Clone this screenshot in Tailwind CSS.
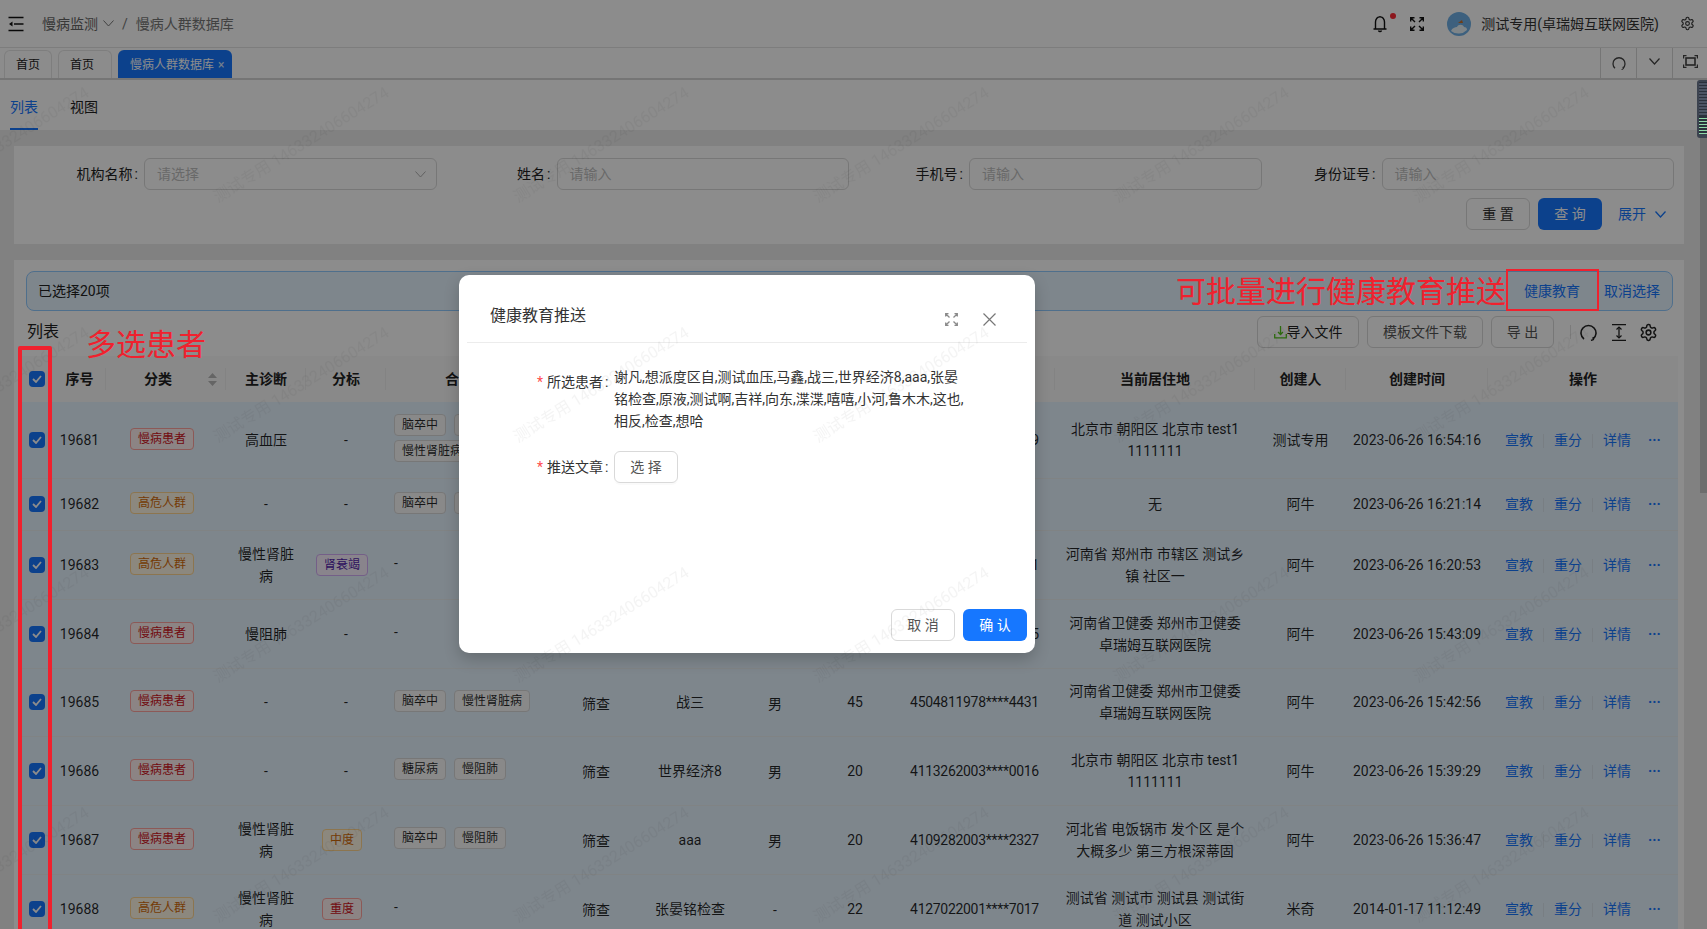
<!DOCTYPE html>
<html lang="zh-CN">
<head>
    <meta charset="UTF-8">
    <meta name="viewport" content="width=device-width, initial-scale=1.0">
    <title>慢病人群数据库</title>
    <script src="https://cdn.jsdelivr.net/npm/@tailwindcss/browser@4"></script>
</head>
<body class="relative h-screen overflow-hidden bg-[#ebebeb] text-sm text-black/85 font-['Roboto','Noto_Sans_CJK_SC',sans-serif]">

    <!-- top bar -->
    <header class="h-[48px] bg-white border-b border-[#e4e4e4] flex items-center pl-[8px] pr-[12px]">
        <svg class="w-[16px] h-[16px]" viewBox="0 0 16 16" fill="none" stroke="#111" stroke-width="1.6">
            <path d="M0.5 1.5H15.5M6 8H15.5M0.5 14.5H15.5"/>
            <path d="M4.5 5.5V10.5L1 8Z" fill="#111" stroke="none"/>
        </svg>
        <span class="ml-[18px] text-[#666]">慢病监测</span>
        <svg class="w-[11px] h-[7px] ml-[5px]" viewBox="0 0 11 7" fill="none" stroke="#777" stroke-width="1"><path d="M0.5 0.5L5.5 6L10.5 0.5"/></svg>
        <span class="ml-[8px] text-[#777]">/</span>
        <span class="ml-[8px] text-[#777]">慢病人群数据库</span>
        <div class="ml-auto flex items-center">
            <div class="relative w-[14px] h-[18px] mr-[23px]">
                <svg class="w-[14px] h-[18px]" viewBox="0 0 14 18" fill="none" stroke="#111" stroke-width="1.4">
                    <path d="M2.5 13.5V7a4.5 5.2 0 0 1 9 0v6.5M0.5 14H13.5M7 1V2M5.5 15.5a1.6 1.6 0 0 0 3 0"/>
                </svg>
                <span class="absolute left-[17px] -top-[2px] w-[6px] h-[6px] rounded-full bg-[#ff2a35]"></span>
            </div>
            <svg class="w-[14px] h-[14px] mr-[23px]" viewBox="0 0 14 14" fill="none" stroke="#111" stroke-width="1.4">
                <path d="M0.7 4.5V0.7H4.5M0.7 0.7L5 5M13.3 4.5V0.7H9.5M13.3 0.7L9 5M0.7 9.5V13.3H4.5M0.7 13.3L5 9M13.3 9.5V13.3H9.5M13.3 13.3L9 9"/>
            </svg>
            <svg class="w-[24px] h-[24px]" viewBox="0 0 24 24">
                <circle cx="12" cy="12" r="12" fill="#6fb0e6"/>
                <path d="M4 19c1-3 4-4 6-4 1-3 6-3 7 0 2 0 3 1 3 3a12 12 0 0 1-16 1z" fill="#e8f2f8"/>
                <path d="M11 11l4-3 1 3z" fill="#c9702a"/>
            </svg>
            <span class="ml-[10px] text-[#333]">测试专用(卓瑞姆互联网医院)</span>
            <svg class="w-[15px] h-[15px] ml-[21px]" viewBox="0 0 24 24" fill="none" stroke="#333" stroke-width="1.8">
                <path d="M12.22 2h-.44a2 2 0 0 0-2 2v.18a2 2 0 0 1-1 1.73l-.43.25a2 2 0 0 1-2 0l-.15-.08a2 2 0 0 0-2.73.73l-.22.38a2 2 0 0 0 .73 2.73l.15.1a2 2 0 0 1 1 1.72v.51a2 2 0 0 1-1 1.74l-.15.09a2 2 0 0 0-.73 2.73l.22.38a2 2 0 0 0 2.73.73l.15-.08a2 2 0 0 1 2 0l.43.25a2 2 0 0 1 1 1.73V20a2 2 0 0 0 2 2h.44a2 2 0 0 0 2-2v-.18a2 2 0 0 1 1-1.73l.43-.25a2 2 0 0 1 2 0l.15.08a2 2 0 0 0 2.73-.73l.22-.39a2 2 0 0 0-.73-2.73l-.15-.08a2 2 0 0 1-1-1.74v-.5a2 2 0 0 1 1-1.74l.15-.09a2 2 0 0 0 .73-2.73l-.22-.38a2 2 0 0 0-2.73-.73l-.15.08a2 2 0 0 1-2 0l-.43-.25a2 2 0 0 1-1-1.73V4a2 2 0 0 0-2-2z"/>
                <circle cx="12" cy="12" r="3"/>
            </svg>
        </div>
    </header>

    <!-- page tabs -->
    <div class="h-[32px] bg-white border-b-2 border-[#d6d6d6] flex items-end pl-[4px] text-xs">
        <div class="h-[28px] w-[48px] flex items-center pl-[11px] border border-b-0 border-[#e6e6e6] rounded-t-md text-[#222]">首页</div>
        <div class="h-[28px] w-[54px] ml-[6px] flex items-center pl-[11px] border border-b-0 border-[#e6e6e6] rounded-t-md text-[#222]">首页</div>
        <div class="h-[28px] w-[114px] ml-[6px] flex items-center pl-[12px] pt-[1px] rounded-t-md bg-[#1677ff] text-white">慢病人群数据库<span class="ml-[4px] text-[#d8e8ff]">×</span></div>
        <div class="ml-auto h-[30px] w-[107px] flex">
            <div class="w-[36px] border-l border-[#d6d6d6] flex items-center justify-center">
                <svg class="w-[14px] h-[14px]" viewBox="0 0 14 14" fill="none" stroke="#444" stroke-width="1.3"><path d="M3 12.2A6 6 0 1 1 11 12.2"/><path d="M9.5 13.6L11.3 13L11.1 10.8" stroke-width="1"/></svg>
            </div>
            <div class="w-[36px] border-l border-[#d6d6d6] flex items-center justify-center pb-[4px]">
                <svg class="w-[11px] h-[7px]" viewBox="0 0 11 7" fill="none" stroke="#444" stroke-width="1.2"><path d="M0.5 0.5L5.5 6L10.5 0.5"/></svg>
            </div>
            <div class="w-[35px] border-l border-[#d6d6d6] flex items-center justify-center pb-[3px]">
                <svg class="w-[15px] h-[13px]" viewBox="0 0 15 13" fill="none" stroke="#444" stroke-width="1.2">
                    <path d="M0.6 3.5V0.6H3.5M11.5 0.6H14.4V3.5M0.6 9.5V12.4H3.5M11.5 12.4H14.4V9.5"/>
                    <rect x="3" y="3" width="9" height="7" stroke-width="1.6"/>
                </svg>
            </div>
        </div>
    </div>

    <!-- list / view tabs -->
    <div class="h-[50px] bg-white flex pl-[10px] gap-[32px]">
        <div class="h-[50px] pt-[17px] border-b-2 border-[#1677ff] text-[#1677ff] leading-[20px]">列表</div>
        <div class="h-[50px] pt-[17px] text-[#222] leading-[20px]">视图</div>
    </div>

    <!-- search -->
    <section class="mt-[16px] ml-[14px] w-[1670px] h-[98px] bg-white px-[10px] pt-[12px]">
        <div class="grid grid-cols-4">
            <div class="flex items-center">
                <label class="w-[120px] pr-[4px] text-right text-[#222]">机构名称<span class="mx-[2px]">:</span></label>
                <div class="flex-1 h-[32px] border border-[#d9d9d9] rounded-md pl-[12px] pr-[10px] flex items-center justify-between text-[#bfbfbf]">
                    请选择
                    <svg class="w-[11px] h-[7px]" viewBox="0 0 11 7" fill="none" stroke="#b0b0b0" stroke-width="1"><path d="M0.5 0.5L5.5 6L10.5 0.5"/></svg>
                </div>
            </div>
            <div class="flex items-center">
                <label class="w-[120px] pr-[4px] text-right text-[#222]">姓名<span class="mx-[2px]">:</span></label>
                <div class="flex-1 h-[32px] border border-[#d9d9d9] rounded-md px-[12px] flex items-center text-[#bfbfbf]">请输入</div>
            </div>
            <div class="flex items-center">
                <label class="w-[120px] pr-[4px] text-right text-[#222]">手机号<span class="mx-[2px]">:</span></label>
                <div class="flex-1 h-[32px] border border-[#d9d9d9] rounded-md px-[12px] flex items-center text-[#bfbfbf]">请输入</div>
            </div>
            <div class="flex items-center">
                <label class="w-[120px] pr-[4px] text-right text-[#222]">身份证号<span class="mx-[2px]">:</span></label>
                <div class="flex-1 h-[32px] border border-[#d9d9d9] rounded-md px-[12px] flex items-center text-[#bfbfbf]">请输入</div>
            </div>
        </div>
        <div class="mt-[8px] flex justify-end items-center pr-[8px]">
            <button class="w-[64px] h-[32px] border border-[#d9d9d9] rounded-md text-[#333]">重 置</button>
            <button class="w-[64px] h-[32px] ml-[8px] rounded-md bg-[#1677ff] text-white">查 询</button>
            <span class="ml-[16px] text-[#1677ff]">展开</span>
            <svg class="w-[11px] h-[7px] ml-[9px]" viewBox="0 0 11 7" fill="none" stroke="#1677ff" stroke-width="1.3"><path d="M0.5 0.5L5.5 6L10.5 0.5"/></svg>
        </div>
    </section>

    <!-- table card -->
    <section class="mt-[16px] ml-[14px] w-[1670px] h-[700px] bg-white pt-[11px] pl-[12px]">
        <div class="w-[1647px] h-[40px] bg-[#e6f4ff] border border-[#91caff] rounded-lg flex items-center pl-[11px] pr-[12px]">
            <span class="text-[#222]">已选择20项</span>
            <span class="ml-auto text-[#1677ff]">健康教育</span>
            <span class="ml-[24px] text-[#1677ff]">取消选择</span>
        </div>
        <div class="w-[1632px] mt-[5px] h-[32px] flex items-center">
            <span class="text-base text-[#222] ml-[1px]">列表</span>
            <button class="ml-auto w-[102px] h-[32px] border border-[#d9d9d9] rounded-md flex items-center justify-center text-[#222]">
                <svg class="w-[13px] h-[14px]" viewBox="0 0 13 14" fill="none" stroke="#52c41a" stroke-width="1.3"><path d="M6.5 1V9M4 7L6.5 9.5L9 7M0.7 9V12.8H12.3V9" /></svg>导入文件
            </button>
            <button class="ml-[8px] w-[116px] h-[32px] border border-[#d9d9d9] rounded-md text-[#555]">模板文件下载</button>
            <button class="ml-[8px] w-[63px] h-[32px] border border-[#d9d9d9] rounded-md text-[#555]">导 出</button>
            <span class="ml-[16px] w-px h-[14px] bg-[#e0e0e0]"></span>
            <svg class="ml-[9px] w-[17px] h-[17px]" viewBox="0 0 17 17" fill="none" stroke="#222" stroke-width="1.6"><path d="M4 15A7.5 7.5 0 1 1 13 15"/><path d="M11 16.5L13.4 15.6L13.2 13" stroke-width="1.4"/></svg>
            <svg class="ml-[15px] w-[14px] h-[17px]" viewBox="0 0 14 17" fill="none" stroke="#222" stroke-width="1.3"><path d="M0 0.7H14M0 16.3H14M7 3V14"/><path d="M4.5 5.5L7 3L9.5 5.5M4.5 11.5L7 14L9.5 11.5" stroke-width="1.2"/></svg>
            <svg class="ml-[13px] w-[19px] h-[19px]" viewBox="0 0 24 24" fill="none" stroke="#222" stroke-width="1.9">
                <path d="M12.22 2h-.44a2 2 0 0 0-2 2v.18a2 2 0 0 1-1 1.73l-.43.25a2 2 0 0 1-2 0l-.15-.08a2 2 0 0 0-2.73.73l-.22.38a2 2 0 0 0 .73 2.73l.15.1a2 2 0 0 1 1 1.72v.51a2 2 0 0 1-1 1.74l-.15.09a2 2 0 0 0-.73 2.73l.22.38a2 2 0 0 0 2.73.73l.15-.08a2 2 0 0 1 2 0l.43.25a2 2 0 0 1 1 1.73V20a2 2 0 0 0 2 2h.44a2 2 0 0 0 2-2v-.18a2 2 0 0 1 1-1.73l.43-.25a2 2 0 0 1 2 0l.15.08a2 2 0 0 0 2.73-.73l.22-.39a2 2 0 0 0-.73-2.73l-.15-.08a2 2 0 0 1-1-1.74v-.5a2 2 0 0 1 1-1.74l.15-.09a2 2 0 0 0 .73-2.73l-.22-.38a2 2 0 0 0-2.73-.73l-.15.08a2 2 0 0 1-2 0l-.43-.25a2 2 0 0 1-1-1.73V4a2 2 0 0 0-2-2z"/>
                <circle cx="12" cy="12" r="3"/>
            </svg>
        </div>
        <table class="mt-[8px] -ml-[6px] w-[1658px] table-fixed border-collapse text-center">
            <colgroup>
                <col class="w-[33px]"><col class="w-[53px]"><col class="w-[120px]"><col class="w-[80px]"><col class="w-[80px]"><col class="w-[160px]"><col class="w-[100px]"><col class="w-[88px]"><col class="w-[82px]"><col class="w-[78px]"><col class="w-[161px]"><col class="w-[200px]"><col class="w-[91px]"><col class="w-[142px]"><col class="w-[190px]">
            </colgroup>
            <thead>
                <tr class="h-[46px] bg-[#fafafa] font-semibold text-[#222]">
                    <th><span class="mx-auto flex w-[16px] h-[16px] items-center justify-center rounded-[4px] bg-[#1677ff]"><svg class="w-[10px] h-[8px]" viewBox="0 0 10 8" fill="none" stroke="#fff" stroke-width="1.8"><path d="M1 4L4 7L9 1"/></svg></span></th>
                    <th class="relative after:absolute after:right-0 after:top-[12px] after:h-[22px] after:w-px after:bg-[#efefef]">序号</th>
                    <th class="relative after:absolute after:right-0 after:top-[12px] after:h-[22px] after:w-px after:bg-[#efefef]">
                        <span class="mr-[16px]">分类</span>
                        <svg class="absolute right-[9px] top-[17px] w-[9px] h-[13px]" viewBox="0 0 9 13" fill="#b8b8b8"><path d="M4.5 0L9 5H0ZM0 8H9L4.5 13Z"/></svg>
                    </th>
                    <th class="relative after:absolute after:right-0 after:top-[12px] after:h-[22px] after:w-px after:bg-[#efefef]">主诊断</th>
                    <th class="relative after:absolute after:right-0 after:top-[12px] after:h-[22px] after:w-px after:bg-[#efefef]">分标</th>
                    <th class="relative after:absolute after:right-0 after:top-[12px] after:h-[22px] after:w-px after:bg-[#efefef]">合并症</th>
                    <th></th><th></th><th></th><th></th>
                    <th class="relative after:absolute after:right-0 after:top-[12px] after:h-[22px] after:w-px after:bg-[#efefef]"></th>
                    <th class="relative after:absolute after:right-0 after:top-[12px] after:h-[22px] after:w-px after:bg-[#efefef]">当前居住地</th>
                    <th class="relative after:absolute after:right-0 after:top-[12px] after:h-[22px] after:w-px after:bg-[#efefef]">创建人</th>
                    <th class="relative after:absolute after:right-0 after:top-[12px] after:h-[22px] after:w-px after:bg-[#efefef]">创建时间</th>
                    <th>操作</th>
                </tr>
            </thead>
            <tbody id="rows" class="leading-[22px]"></tbody>
        </table>
    </section>

    <!-- dim layer -->
    <div class="absolute inset-0 bg-black/45"></div>

    <!-- dialog -->
    <div class="absolute left-[459px] top-[275px] w-[576px] h-[378px] bg-white rounded-[10px] shadow-[0_6px_16px_rgba(0,0,0,0.2)] flex flex-col">
        <div class="mx-[8px] h-[68px] border-b border-[#ececec] flex items-center pl-[23px] pr-[31px] pt-[15px]">
            <span class="text-base text-[#333]">健康教育推送</span>
            <svg class="ml-auto mt-[6px] w-[13px] h-[13px]" viewBox="0 0 13 13" fill="none" stroke="#8a8a8a" stroke-width="1.3"><path d="M0.7 3.5V0.7H3.5M0.7 0.7L4.5 4.5M12.3 3.5V0.7H9.5M12.3 0.7L8.5 4.5M0.7 9.5V12.3H3.5M0.7 12.3L4.5 8.5M12.3 9.5V12.3H9.5M12.3 12.3L8.5 8.5"/></svg>
            <svg class="ml-[25px] mt-[6px] w-[13px] h-[13px]" viewBox="0 0 13 13" fill="none" stroke="#777" stroke-width="1.2"><path d="M0.5 0.5L12.5 12.5M12.5 0.5L0.5 12.5"/></svg>
        </div>
        <div class="flex pt-[23px] pl-[78px] leading-[22px] text-[#333]">
            <span class="w-[77px] pt-[5px] shrink-0 whitespace-nowrap"><span class="text-[#ff4d4f] mr-[4px]">*</span>所选患者<span class="mx-[2px]">:</span></span>
            <span>谢凡,想派度区自,测试血压,马鑫,战三,世界经济8,aaa,张晏<br>铭检查,原液,测试啊,吉祥,向东,渫渫,嘻嘻,小河,鲁木木,这也,<br>相反,检查,想哈</span>
        </div>
        <div class="flex items-center mt-[19px] pl-[78px] text-[#333]">
            <span class="w-[77px] shrink-0 whitespace-nowrap"><span class="text-[#ff4d4f] mr-[4px]">*</span>推送文章<span class="mx-[2px]">:</span></span>
            <button class="w-[64px] h-[32px] border border-[#d9d9d9] rounded-md text-[#555] shadow-[0_2px_0_rgba(0,0,0,0.02)]">选 择</button>
        </div>
        <div class="mt-auto mb-[12px] mr-[8px] flex justify-end gap-[8px]">
            <button class="w-[64px] h-[32px] border border-[#d9d9d9] rounded-md text-[#555]">取 消</button>
            <button class="w-[64px] h-[32px] rounded-md bg-[#1677ff] text-white">确 认</button>
        </div>
    </div>

    <!-- watermark -->
    <svg class="absolute inset-0 w-full h-full pointer-events-none">
        <defs>
            <pattern id="wm" x="200" y="83" width="300" height="240" patternUnits="userSpaceOnUse">
                <text x="18" y="120" transform="rotate(-32 18 120)" font-size="16" fill="#000" fill-opacity="0.045">测试专用 146332406604274</text>
            </pattern>
        </defs>
        <rect width="100%" height="100%" fill="url(#wm)"/>
    </svg>

    <!-- red annotations -->
    <div class="absolute left-[18px] top-[346px] w-[34px] h-[600px] border-4 border-[#f0212e] rounded-[2px]"></div>
    <span class="absolute left-[86px] top-[323px] text-[30px] leading-[44px] text-[#f0212e]">多选患者</span>
    <span class="absolute left-[1176px] top-[270px] text-[30px] leading-[44px] text-[#f0212e]">可批量进行健康教育推送</span>
    <div class="absolute left-[1506px] top-[269px] w-[93px] h-[42px] border-2 border-[#f0212e]"></div>

    <!-- scrollbars -->
    <div class="absolute right-0 top-[138px] w-[7px] h-[355px] bg-black/15"></div>
    <div class="absolute right-0 top-[80px] w-[10px] h-[58px] rounded-l-[3px] bg-[#3c4350] p-[2px] pr-0">
        <div class="h-[34px] bg-[repeating-linear-gradient(to_bottom,#2b313c_0_1px,#4c5464_1px_3px)]"></div>
        <div class="h-[18px] bg-[repeating-linear-gradient(to_bottom,#2b313c_0_2px,#8fd9a8_2px_3px)]"></div>
    </div>

    <script>
        const rows = [
            { h: 'h-[76px]', no: 19681, kind: 'chronic', dx: '高血压', sub: null, co: ['脑卒中', '糖尿病', '慢性肾脏病'], src: '', name: '', sex: '', age: '', id: '4504811978****4439', addr: '北京市 朝阳区 北京市 test1<br>1111111', by: '测试专用', at: '2023-06-26 16:54:16' },
            { h: 'h-[52px]', no: 19682, kind: 'risk', dx: '-', sub: null, co: ['脑卒中', '慢阻肺'], src: '', name: '', sex: '', age: '', id: '', addr: '无', by: '阿牛', at: '2023-06-26 16:21:14' },
            { h: 'h-[69px]', no: 19683, kind: 'risk', dx: '慢性肾脏<br>病', sub: ['肾衰竭', 'purple'], co: [], src: '', name: '', sex: '', age: '', id: '4113262003****0011', addr: '河南省 郑州市 市辖区 测试乡<br>镇 社区一', by: '阿牛', at: '2023-06-26 16:20:53' },
            { h: 'h-[69px]', no: 19684, kind: 'chronic', dx: '慢阻肺', sub: null, co: [], src: '', name: '', sex: '', age: '', id: '4113262003****0015', addr: '河南省卫健委 郑州市卫健委<br>卓瑞姆互联网医院', by: '阿牛', at: '2023-06-26 15:43:09' },
            { h: 'h-[68px]', no: 19685, kind: 'chronic', dx: '-', sub: null, co: ['脑卒中', '慢性肾脏病'], src: '筛查', name: '战三', sex: '男', age: 45, id: '4504811978****4431', addr: '河南省卫健委 郑州市卫健委<br>卓瑞姆互联网医院', by: '阿牛', at: '2023-06-26 15:42:56' },
            { h: 'h-[69px]', no: 19686, kind: 'chronic', dx: '-', sub: null, co: ['糖尿病', '慢阻肺'], src: '筛查', name: '世界经济8', sex: '男', age: 20, id: '4113262003****0016', addr: '北京市 朝阳区 北京市 test1<br>1111111', by: '阿牛', at: '2023-06-26 15:39:29' },
            { h: 'h-[69px]', no: 19687, kind: 'chronic', dx: '慢性肾脏<br>病', sub: ['中度', 'orange'], co: ['脑卒中', '慢阻肺'], src: '筛查', name: 'aaa', sex: '男', age: 20, id: '4109282003****2327', addr: '河北省 电饭锅市 发个区 是个<br>大概多少 第三方根深蒂固', by: '阿牛', at: '2023-06-26 15:36:47' },
            { h: 'h-[69px]', no: 19688, kind: 'risk', dx: '慢性肾脏<br>病', sub: ['重度', 'red'], co: [], src: '筛查', name: '张晏铭检查', sex: '-', age: 22, id: '4127022001****7017', addr: '测试省 测试市 测试县 测试街<br>道 测试小区', by: '米奇', at: '2014-01-17 11:12:49' },
        ];

        const tagBase = 'inline-flex h-[22px] items-center rounded-[4px] border px-[7px] text-xs';
        const tagColors = {
            red: 'bg-[#fff1f0] border-[#ffa39e] text-[#cf1322]',
            orange: 'bg-[#fff7e6] border-[#ffd591] text-[#d46b08]',
            purple: 'bg-[#f9f0ff] border-[#d3adf7] text-[#531dab]',
            grey: 'bg-[#fafafa] border-[#d9d9d9] text-black/85',
        };
        const tag = (text, color) => `<span class="${tagBase} ${tagColors[color]}">${text}</span>`;
        const actionSep = '<span class="mx-[10px] inline-block h-[14px] w-px bg-[#dbe6ef] align-middle"></span>';

        document.getElementById('rows').innerHTML = rows.map(r => `
            <tr class="${r.h} bg-[#e6f4ff] border-b border-[#eaeef0]">
                <td><span class="mx-auto flex w-[16px] h-[16px] items-center justify-center rounded-[4px] bg-[#1677ff]"><svg class="w-[10px] h-[8px]" viewBox="0 0 10 8" fill="none" stroke="#fff" stroke-width="1.8"><path d="M1 4L4 7L9 1"/></svg></span></td>
                <td>${r.no}</td>
                <td class="pr-[8px] pb-[3px]">${r.kind === 'chronic' ? tag('慢病患者', 'red') : tag('高危人群', 'orange')}</td>
                <td>${r.dx}</td>
                <td class="${r.sub ? 'pr-[8px]' : ''}">${r.sub ? tag(r.sub[0], r.sub[1]) : '-'}</td>
                <td class="pl-[8px] pb-[3px] text-left">${r.co.length ? `<div class="flex flex-wrap gap-x-[8px] gap-y-[4px]">${r.co.map(c => tag(c, 'grey')).join('')}</div>` : '-'}</td>
                <td class="pt-[3px]">${r.src}</td>
                <td>${r.name}</td>
                <td class="pt-[3px]">${r.sex}</td>
                <td>${r.age}</td>
                <td class="tracking-[-0.3px]">${r.id}</td>
                <td>${r.addr}</td>
                <td>${r.by}</td>
                <td>${r.at}</td>
                <td class="whitespace-nowrap text-left pl-[17px] text-[#1677ff]">宣教${actionSep}重分${actionSep}详情<span class="ml-[17px] font-bold">···</span></td>
            </tr>`).join('');
    </script>
</body>
</html>
